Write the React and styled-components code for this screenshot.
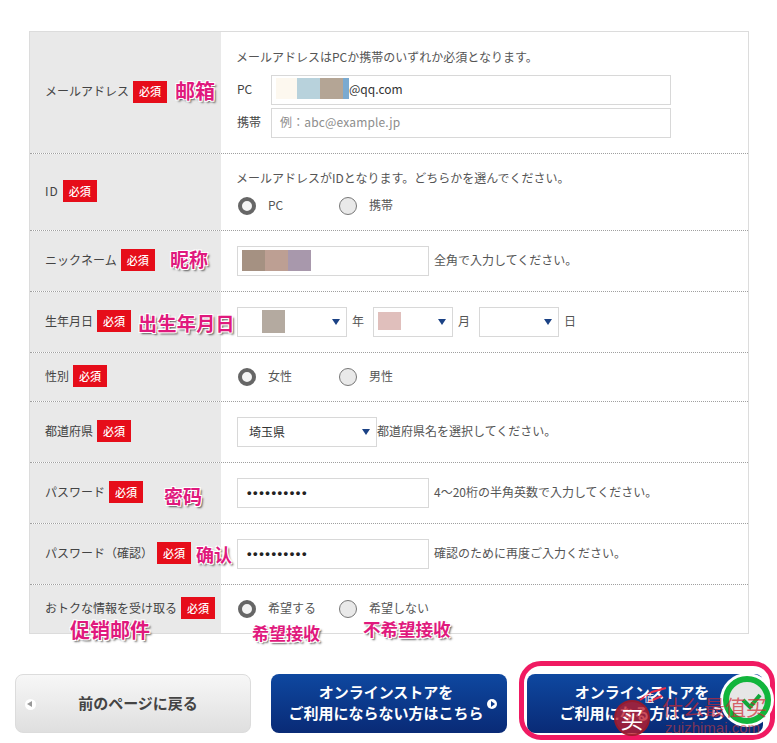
import React from 'react';
import styled, { createGlobalStyle } from 'styled-components';

const GlobalStyle = createGlobalStyle`
  html, body {
    margin: 0;
    padding: 0;
    background: #fff;
    font-family: "Noto Sans CJK JP", "Noto Sans", sans-serif;
    color: #444;
  }
`;

const Page = styled.div`
  position: relative;
  width: 777px;
  height: 743px;
  padding-top: 31px;
  box-sizing: border-box;
  overflow: hidden;
`;

const Table = styled.div`
  margin-left: 29px;
  width: 720px;
  box-sizing: border-box;
  border: 1px solid #dcdcdc;
`;

const Row = styled.div`
  display: grid;
  grid-template-columns: 191px 1fr;
  height: ${(p) => p.$h}px;
  box-sizing: border-box;
  border-bottom: ${(p) => (p.$last ? 'none' : '1px dotted #a0a0a0')};
`;

const LabelCell = styled.div`
  display: flex;
  align-items: center;
  gap: 4px;
  padding: 0 0 2px 15px;
  background: #e9e9e9;
  font-size: 12px;
  white-space: nowrap;
`;

const LabelText = styled.span`
  padding-bottom: 2px;
  letter-spacing: ${(p) => p.$track || 0}px;
`;

const Badge = styled.span`
  display: inline-flex;
  align-items: center;
  justify-content: center;
  width: 34px;
  height: 22px;
  padding-bottom: 1px;
  box-sizing: border-box;
  background: #e60d1a;
  color: #fff;
  font-size: 11px;
  font-weight: 500;
`;

const ValueCell = styled.div`
  display: flex;
  flex-direction: column;
  justify-content: center;
  padding-left: 15px;
  font-size: 12px;
  gap: ${(p) => p.$gap || 0}px;
`;

const Line = styled.div`
  display: flex;
  align-items: center;
  margin-top: ${(p) => p.$top || 0}px;
`;

const Hint = styled.div`
  font-size: 12px;
  color: #555;
  white-space: nowrap;
`;

const Note = styled.span`
  padding-bottom: 3px;
  font-size: 12px;
  color: #555;
  white-space: nowrap;
  margin-left: ${(p) => p.$left ?? 5}px;
`;

const Field = styled.div`
  display: flex;
  align-items: center;
  width: ${(p) => p.$w}px;
  height: 30px;
  box-sizing: border-box;
  padding: 0 0 2px 4px;
  margin-left: 1px;
  border: 1px solid #d8d8d8;
  background: #fff;
  font-size: 12px;
  color: #333;
`;

const EmailLabel = styled.span`
  width: 34px;
  margin-left: 1px;
  padding-bottom: 2px;
  font-size: 12px;
  color: #444;
`;

const EmailField = styled(Field)`
  margin-left: 0;
`;

const Placeholder = styled.span`
  margin-left: 4px;
  letter-spacing: 0.15px;
  color: #8d8d8d;
`;

const Swatch = styled.span`
  display: block;
  width: ${(p) => p.$w}px;
  height: ${(p) => p.$h || 21}px;
  background: ${(p) => p.$c};
`;

const Dots = styled.span`
  margin-left: 5px;
  font-family: "Liberation Sans", sans-serif;
  font-size: 13px;
  font-weight: 700;
  letter-spacing: 1.55px;
  color: #222;
`;

const Select = styled.div`
  position: relative;
  display: flex;
  align-items: center;
  width: ${(p) => p.$w}px;
  height: 30px;
  margin-left: ${(p) => p.$left || 0}px;
  padding: 0 0 2px ${(p) => p.$pad || 0}px;
  box-sizing: border-box;
  border: 1px solid #d8d8d8;
  background: #fff;
  font-size: 12px;
  color: #333;
  &::after {
    content: '';
    position: absolute;
    right: 6px;
    top: 11px;
    border-left: 4px solid transparent;
    border-right: 4px solid transparent;
    border-top: 6px solid #1b4285;
  }
`;

const Unit = styled.span`
  margin-left: 5px;
  padding-bottom: 3px;
  font-size: 12px;
  color: #555;
`;

const RadioGroup = styled.div`
  display: flex;
  align-items: center;
  margin-left: 2px;
`;

const RadioItem = styled.label`
  display: flex;
  align-items: center;
  width: 101px;
  font-size: 12px;
  color: #555;
`;

const RadioMark = styled.span`
  display: block;
  width: 18px;
  height: 18px;
  margin-right: 12px;
  box-sizing: border-box;
  border-radius: 50%;
  border: ${(p) => (p.$on ? '4px solid #666' : '1px solid #777')};
  background: ${(p) => (p.$on ? '#f4f4f4' : '#e9e9e9')};
`;

const Footer = styled.div`
  display: flex;
  gap: 20px;
  margin-top: 40px;
  padding-left: 15px;
`;

const BackButton = styled.button`
  position: relative;
  width: 236px;
  height: 59px;
  padding: 0 0 2px 10px;
  border: 1px solid #dcdcdc;
  border-radius: 8px;
  background: linear-gradient(#f7f7f7, #dfdfdf);
  color: #444;
  font-family: inherit;
  font-size: 15px;
  font-weight: 700;
`;

const BackArrow = styled.span`
  position: absolute;
  left: 9px;
  top: 24px;
  width: 11px;
  height: 11px;
  border-radius: 50%;
  background: #fff;
  &::after {
    content: '';
    position: absolute;
    left: 2px;
    top: 2px;
    border-top: 3.5px solid transparent;
    border-bottom: 3.5px solid transparent;
    border-right: 5px solid #999;
  }
`;

const StoreButton = styled.button`
  position: relative;
  width: 236px;
  height: 59px;
  padding: 0 6px 3px 0;
  border: none;
  border-radius: 8px;
  background: linear-gradient(#0e48a0, #092a76);
  color: #fff;
  font-family: inherit;
  font-size: 15px;
  font-weight: 700;
  line-height: 21px;
`;

const ForwardArrow = styled.span`
  position: absolute;
  left: 216px;
  top: 25px;
  width: 10px;
  height: 10px;
  border-radius: 50%;
  background: #fff;
  &::after {
    content: '';
    position: absolute;
    left: 3.5px;
    top: 2px;
    border-top: 3px solid transparent;
    border-bottom: 3px solid transparent;
    border-left: 4.5px solid #0c3a8c;
  }
`;

const Highlight = styled.div`
  position: absolute;
  left: 519px;
  top: 661px;
  width: 256px;
  height: 79px;
  box-sizing: border-box;
  border: 5px solid #f01a62;
  border-radius: 22px;
`;

const Annotation = styled.span`
  position: absolute;
  left: ${(p) => p.$x}px;
  top: ${(p) => p.$y}px;
  font-family: "Noto Sans CJK SC", sans-serif;
  font-size: ${(p) => p.$size}px;
  font-weight: 700;
  line-height: 1;
  letter-spacing: ${(p) => p.$track || 0}px;
  white-space: nowrap;
  color: #e0197d;
  text-shadow: 1px 1px 0 #fff, -1px -1px 0 #fff, 1px -1px 0 #fff, -1px 1px 0 #fff, 2px 2px 2px #555;
`;

const Stamp = styled.span`
  position: absolute;
  left: 614px;
  top: 700px;
  display: flex;
  align-items: center;
  justify-content: center;
  width: 36px;
  height: 36px;
  box-sizing: border-box;
  border-radius: 50%;
  border: 2px solid rgba(150, 25, 40, 0.75);
  background: rgba(190, 30, 45, 0.78);
  color: #fff;
  font-family: "Noto Sans CJK SC", sans-serif;
  font-size: 23px;
  line-height: 1;
`;

const StampRoof = styled.svg`
  position: absolute;
  left: 638px;
  top: 686px;
  width: 30px;
  height: 18px;
`;

const StampMark = styled.span`
  position: absolute;
  left: 644px;
  top: 693px;
  font-family: "Noto Sans CJK SC", sans-serif;
  font-size: 10px;
  line-height: 1;
  color: #fff;
`;

const WatermarkTitle = styled.span`
  position: absolute;
  left: 662px;
  top: 694px;
  font-family: "Noto Sans CJK SC", sans-serif;
  font-size: 21px;
  line-height: 1.2;
  color: rgba(205, 40, 50, 0.7);
  white-space: nowrap;
`;

const WatermarkUrl = styled.span`
  position: absolute;
  left: 665px;
  top: 719px;
  font-family: "Liberation Sans", sans-serif;
  font-size: 15px;
  line-height: 1.2;
  color: rgba(205, 60, 60, 0.6);
  white-space: nowrap;
`;

const CheckBadge = styled.svg`
  position: absolute;
  left: 719px;
  top: 672px;
  width: 56px;
  height: 56px;
`;

const annotations = [
  { text: '邮箱', x: 175, y: 81, size: 20 },
  { text: '昵称', x: 170, y: 249, size: 19 },
  { text: '出生年月日', x: 138, y: 313, size: 19, track: 0.4 },
  { text: '密码', x: 164, y: 486, size: 19 },
  { text: '确认', x: 196, y: 545, size: 18 },
  { text: '促销邮件', x: 70, y: 620, size: 20 },
  { text: '希望接收', x: 252, y: 624, size: 17 },
  { text: '不希望接收', x: 363, y: 620, size: 17.5 },
];

function FormRow({ h, last, label, track, children, gap }) {
  return (
    <Row $h={h} $last={last}>
      <LabelCell>
        <LabelText $track={track}>{label}</LabelText>
        <Badge>必須</Badge>
      </LabelCell>
      <ValueCell $gap={gap}>{children}</ValueCell>
    </Row>
  );
}

function Radios({ options }) {
  return (
    <RadioGroup>
      {options.map((opt, i) => (
        <RadioItem key={opt}>
          <RadioMark $on={i === 0} />
          <Note $left={0}>{opt}</Note>
        </RadioItem>
      ))}
    </RadioGroup>
  );
}

export default function App() {
  return (
    <Page>
      <GlobalStyle />
      <Table>
        <FormRow h={122} label="メールアドレス">
          <Hint>メールアドレスはPCか携帯のいずれか必須となります。</Hint>
          <Line $top={10}>
            <EmailLabel>PC</EmailLabel>
            <EmailField $w={400}>
              <Swatch $w={21} $c="#fdf8ef" />
              <Swatch $w={23} $c="#b8d2dc" />
              <Swatch $w={23} $c="#b4a595" />
              <Swatch $w={6} $c="#7aaad0" />
              @qq.com
            </EmailField>
          </Line>
          <Line $top={3}>
            <EmailLabel>携帯</EmailLabel>
            <EmailField $w={400}>
              <Placeholder>例：abc@example.jp</Placeholder>
            </EmailField>
          </Line>
        </FormRow>
        <FormRow h={77} label="ID" track={1} gap={10}>
          <Hint>メールアドレスがIDとなります。どちらかを選んでください。</Hint>
          <Radios options={['PC', '携帯']} />
        </FormRow>
        <FormRow h={61} label="ニックネーム">
          <Line>
            <Field $w={192}>
              <Swatch $w={23} $c="#a59182" />
              <Swatch $w={23} $c="#bd9f93" />
              <Swatch $w={23} $c="#a898ac" />
            </Field>
            <Note>全角で入力してください。</Note>
          </Line>
        </FormRow>
        <FormRow h={61} label="生年月日">
          <Line>
            <Select $w={110} $left={1} $pad={24}>
              <Swatch $w={23} $h={23} $c="#b4aaa0" />
            </Select>
            <Unit>年</Unit>
            <Select $w={80} $left={9} $pad={4}>
              <Swatch $w={23} $h={18} $c="#e0bfbc" />
            </Select>
            <Unit>月</Unit>
            <Select $w={80} $left={9} />
            <Unit>日</Unit>
          </Line>
        </FormRow>
        <FormRow h={49} label="性別">
          <Radios options={['女性', '男性']} />
        </FormRow>
        <FormRow h={61} label="都道府県">
          <Line>
            <Select $w={140} $left={1} $pad={11}>埼玉県</Select>
            <Note $left={0}>都道府県名を選択してください。</Note>
          </Line>
        </FormRow>
        <FormRow h={61} label="パスワード">
          <Line>
            <Field $w={192}><Dots>••••••••••</Dots></Field>
            <Note>4～20桁の半角英数で入力してください。</Note>
          </Line>
        </FormRow>
        <FormRow h={61} label="パスワード（確認）">
          <Line>
            <Field $w={192}><Dots>••••••••••</Dots></Field>
            <Note>確認のために再度ご入力ください。</Note>
          </Line>
        </FormRow>
        <FormRow h={48} last label="おトクな情報を受け取る">
          <Radios options={['希望する', '希望しない']} />
        </FormRow>
      </Table>

      <Footer>
        <BackButton>
          <BackArrow />
          前のページに戻る
        </BackButton>
        <StoreButton>
          オンラインストアを<br />ご利用にならない方はこちら
          <ForwardArrow />
        </StoreButton>
        <StoreButton>
          オンラインストアを<br />ご利用になる方はこちら
        </StoreButton>
      </Footer>

      {annotations.map((a) => (
        <Annotation key={a.text} $x={a.x} $y={a.y} $size={a.size} $track={a.track}>
          {a.text}
        </Annotation>
      ))}
      <Highlight />
      <CheckBadge viewBox="0 0 56 56">
        <circle cx="28" cy="28" r="27" fill="#fff" />
        <circle cx="28" cy="28" r="21" fill="#e6e6e6" stroke="#12b53c" strokeWidth="6" />
        <path d="M24 28 L31 35 L41 23" fill="none" stroke="#12a83a" strokeWidth="4" />
      </CheckBadge>
      <Stamp>买</Stamp>
      <StampRoof viewBox="0 0 30 18">
        <path d="M2 14 L14 6 L28 2 M10 16 L24 10" fill="none" stroke="#e8304a" strokeWidth="2" />
      </StampRoof>
      <StampMark>值</StampMark>
      <WatermarkTitle>什么最值买</WatermarkTitle>
      <WatermarkUrl>zuizhimai.com</WatermarkUrl>
    </Page>
  );
}
